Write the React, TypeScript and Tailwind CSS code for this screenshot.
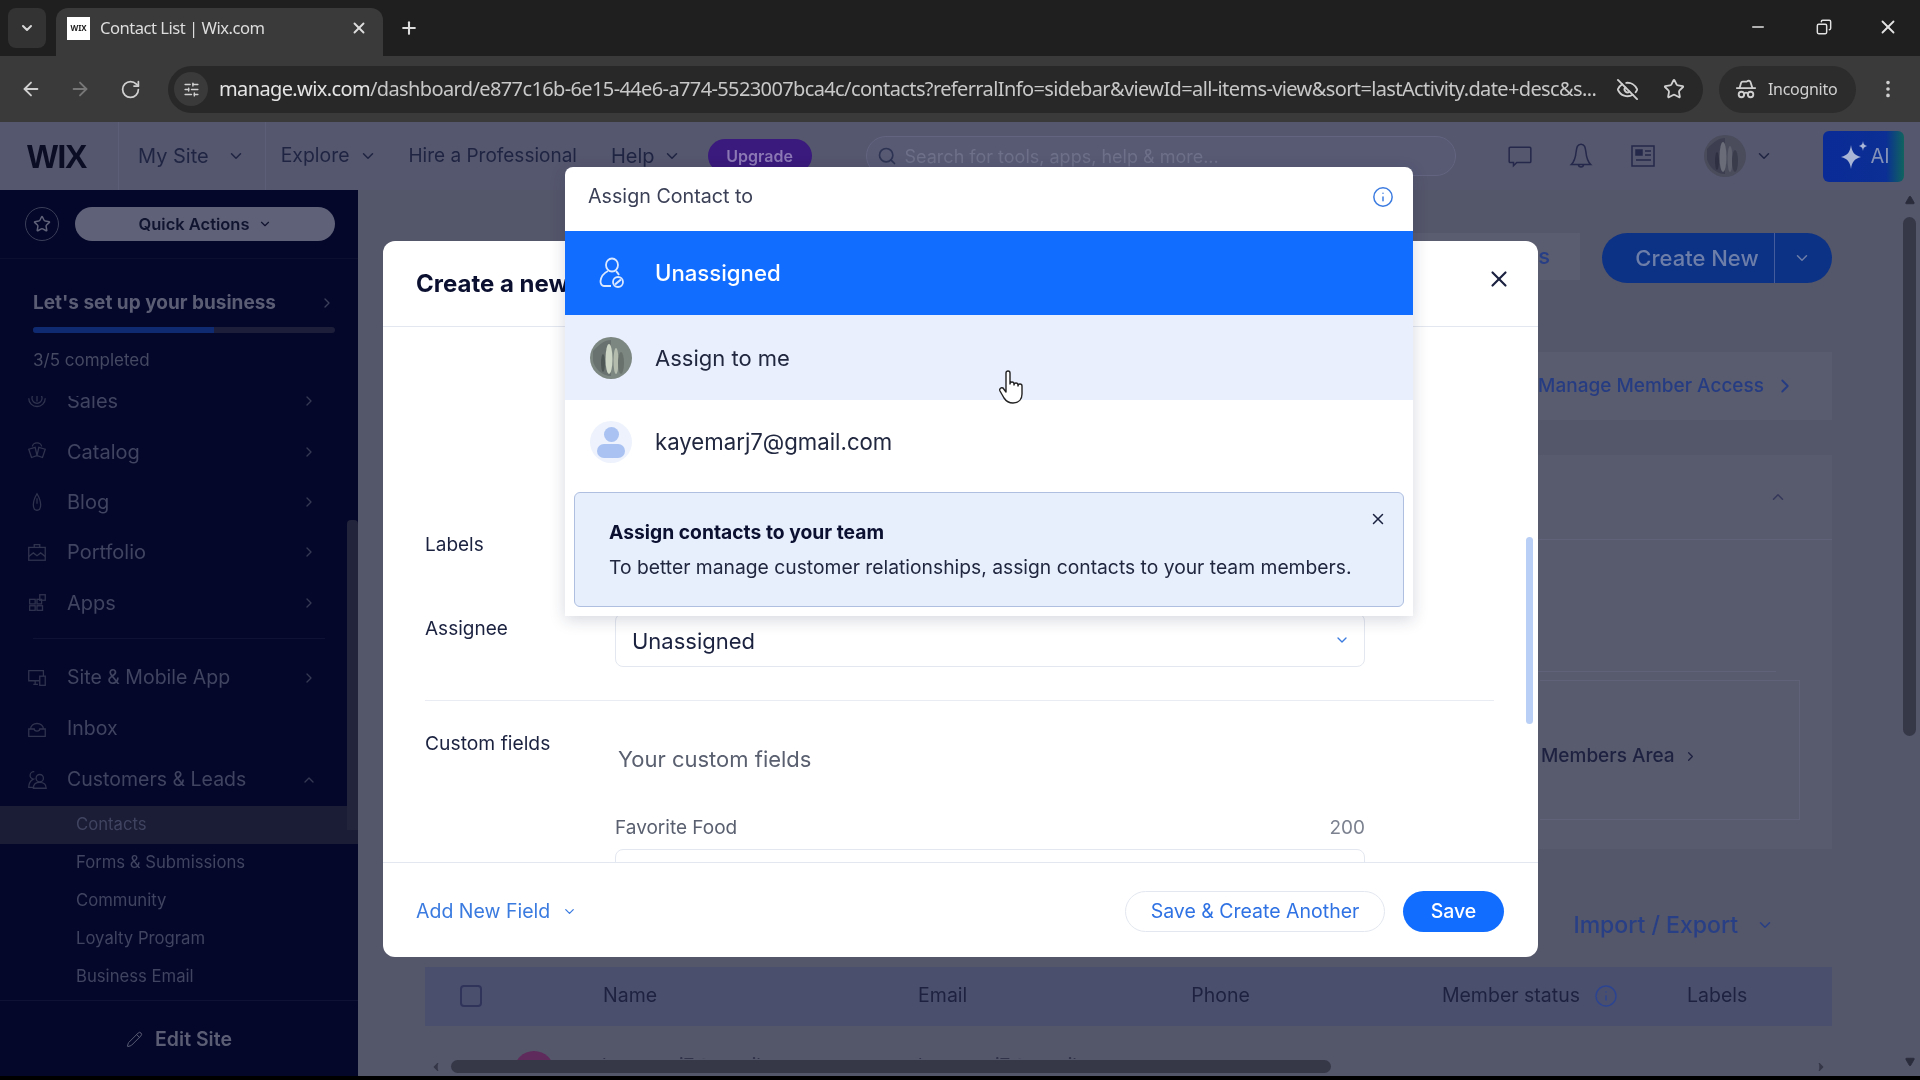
import React from "react";
import {
  ChevronDown, ChevronUp, ChevronRight, ChevronLeft, X, Plus, ArrowLeft, ArrowRight, RotateCw, SlidersHorizontal, EyeOff, Star, MoreVertical, Minus,
  Search, Info, Pencil, HatGlasses, Copy, Triangle,
} from "lucide-react";

function Ico({ children }: { children: React.ReactNode }) {
  return (
    <svg width="22" height="22" viewBox="0 0 24 24" fill="none" stroke="currentColor" strokeWidth="1.4" className="ml-[26px] shrink-0 text-[#30334e]">
      {children}
    </svg>
  );
}

const SalesIcon = () => (
  <Ico><circle cx="12" cy="9" r="5.5" /><path d="M12 5.5v7M3 9a9 9 0 0 0 18 0" /></Ico>
);
const CatalogIcon = () => (
  <Ico><path d="M3 9l7-2 2 9-6 2zM21 9l-7-2-2 9 6 2zM7 6a5 4 0 0 1 10 0" /></Ico>
);
const BlogIcon = () => (
  <Ico><path d="M12 3C9 8 8 12 8 15c0 4 2 6 4 6s4-2 4-6c0-3-1-7-4-12zM12 8v6" /></Ico>
);
const PortfolioIcon = () => (
  <Ico><rect x="3" y="7" width="18" height="14" /><path d="M9 7V4h6v3M3 17l5-4 4 3 4-3 5 4" /></Ico>
);
const AppsIcon = () => (
  <Ico><rect x="4" y="8" width="6" height="5" /><rect x="4" y="15" width="6" height="5" /><rect x="12" y="15" width="6" height="5" /><rect x="12" y="8" width="5" height="5" /><rect x="15" y="3" width="6" height="6" /></Ico>
);

const menuTop = [
  { icon: SalesIcon, label: "Sales", h: "h-[51px]" },
  { icon: CatalogIcon, label: "Catalog", h: "h-[51px]" },
  { icon: BlogIcon, label: "Blog", h: "h-[50px]" },
  { icon: PortfolioIcon, label: "Portfolio", h: "h-[50px]" },
  { icon: AppsIcon, label: "Apps", h: "h-[51px]" },
];

const subItems = ["Contacts", "Forms & Submissions", "Community", "Loyalty Program", "Business Email"];

function Photo({ size, dim }: { size: number; dim?: boolean }) {
  return (
    <svg width={size} height={size} viewBox="0 0 42 42" className="shrink-0">
      <circle cx="21" cy="21" r="21" fill={dim ? "#4a4c5c" : "#7d8781"} />
      <path d="M3 14 C10 6 16 3 21 3 V39 C12 39 5 32 3 24Z" fill={dim ? "#3d3f50" : "#6a7270"} />
      <ellipse cx="19" cy="22" rx="3.5" ry="15" fill={dim ? "#6a6c78" : "#cdd5c4"} />
      <ellipse cx="26" cy="24" rx="2.5" ry="13" fill={dim ? "#5e606e" : "#b4bcae"} />
      <ellipse cx="13" cy="26" rx="2" ry="9" fill={dim ? "#2f3142" : "#4f5755"} />
      <ellipse cx="31" cy="26" rx="3" ry="11" fill={dim ? "#3a3c4c" : "#69716c"} />
    </svg>
  );
}

function TabStrip() {
  return (
    <div className="h-14 bg-[#1f1f1f] flex items-end relative shrink-0 font-['Noto_Sans',sans-serif]">
      <div className="w-[38px] h-10 ml-2 mb-2 rounded-lg bg-[#333333] flex items-center justify-center text-[#d8d8d8]">
        <ChevronDown size={16} strokeWidth={3} />
      </div>
      <div className="w-[327px] h-12 ml-[10px] bg-[#3a3a3a] rounded-t-xl flex items-center pb-2 text-[#dddddd]">
        <div className="ml-[11px] w-[23px] h-[23px] bg-white text-[#222222] text-[8px] font-bold flex items-center justify-center">WIX</div>
        <span className="ml-[10px] text-[16.6px] tracking-[-0.5px] flex-1">Contact List | Wix.com</span>
        <X size={18} strokeWidth={2.5} className="mr-[15px]" />
      </div>
      <div className="ml-[16px] mb-[18px] text-[#dddddd]"><Plus size={20} strokeWidth={2.5} /></div>
      <div className="flex-1" />
      <div className="flex items-center mb-[18px] text-[#e2e2e2]">
        <Minus size={18} className="mr-[49px]" />
        <Copy size={16} strokeWidth={2.2} className="mr-[45px] -scale-x-100" />
        <X size={22} className="mr-[21px]" />
      </div>
    </div>
  );
}

function Toolbar() {
  return (
    <div className="h-[66px] bg-[#3a3a3a] flex items-center shrink-0 font-['Noto_Sans',sans-serif] text-[#d0d0d0]">
      <ArrowLeft size={22} className="ml-5" />
      <ArrowRight size={22} className="ml-[27px] text-[#777777]" />
      <RotateCw size={21} className="ml-[29px]" />
      <div className="ml-[27px] w-[1535px] h-[47px] rounded-full bg-[#282828] flex items-center">
        <div className="ml-[6px] w-[34px] h-[34px] rounded-full bg-[#3a3a3a] flex items-center justify-center">
          <SlidersHorizontal size={17} />
        </div>
        <span className="ml-[11px] w-[1378px] text-[20px] tracking-[-0.62px] whitespace-nowrap overflow-hidden text-[#c8c8c8]">
          <span className="text-[#e4e4e4]">manage.wix.com</span>/dashboard/e877c16b-6e15-44e6-a774-5523007bca4c/contacts?referralInfo=sidebar&amp;viewId=all-items-view&amp;sort=lastActivity.date+desc&amp;s...
        </span>
        <EyeOff size={23} className="ml-[19px]" />
        <Star size={22} className="ml-[24px]" />
      </div>
      <div className="ml-[16px] w-[137px] h-[47px] rounded-full bg-[#2c2c2c] flex items-center">
        <HatGlasses size={22} className="ml-[16px]" />
        <span className="ml-[11px] text-[16px] tracking-[-0.3px]">Incognito</span>
      </div>
      <MoreVertical size={22} className="ml-[21px]" />
    </div>
  );
}

function WixHeader() {
  return (
    <div className="h-[68px] bg-[#55576e] flex items-center shrink-0 text-[#1f2442] text-[19px] relative">
      <div className="ml-[27px] w-[64px] text-[33px] leading-none font-bold text-[#0a0d24] tracking-[-1px] font-['Liberation_Sans',sans-serif]">WIX</div>
      <div className="w-px h-full bg-[#5c5e77] ml-[27px]" />
      <span className="ml-[19px] text-[20px]">My Site</span>
      <ChevronDown size={18} className="ml-[18px]" />
      <div className="w-px h-full bg-[#5c5e77] ml-[20px]" />
      <span className="ml-[15px] text-[19.4px]">Explore</span>
      <ChevronDown size={18} className="ml-[10px]" />
      <span className="ml-[31px]">Hire a Professional</span>
      <span className="ml-[34px] text-[20px]">Help</span>
      <ChevronDown size={18} className="ml-2" />
      <div className="ml-[27px] w-[104px] h-[34px] rounded-full bg-[#3a1a7c] text-[#8b78b4] text-[16px] font-semibold flex items-center justify-center">Upgrade</div>
      <div className="ml-[54px] w-[590px] h-10 rounded-full border border-[#636580] bg-[#585a74] flex items-center text-[#6e7089]">
        <Search size={20} className="ml-[10px] text-[#2d3352]" />
        <span className="ml-2 text-[18px]">Search for tools, apps, help &amp; more...</span>
      </div>
      <svg width="26" height="26" viewBox="0 0 24 24" fill="none" stroke="#25284a" strokeWidth="1.4" className="ml-[51px] shrink-0">
        <path d="M3 4h18a1 1 0 0 1 1 1v12a1 1 0 0 1-1 1H9l-3 3v-3H3a1 1 0 0 1-1-1V5a1 1 0 0 1 1-1z" />
      </svg>
      <svg width="26" height="28" viewBox="0 0 24 26" fill="none" stroke="#25284a" strokeWidth="1.4" className="ml-[35px] shrink-0">
        <path d="M12 2C8.5 2 8 5 7.5 9 7 14 6 18 3 21h18c-3-3-4-7-4.500-12C16 5 15.500 2 12 2zM9.500 21c.5 3 4.500 3 5 0" />
      </svg>
      <svg width="24" height="24" viewBox="0 0 24 24" fill="none" stroke="#25284a" strokeWidth="1.5" className="ml-[37px] shrink-0">
        <rect x="1" y="2" width="22" height="20" />
        <rect x="5" y="6" width="6" height="5" fill="#25284a" />
        <path d="M14 7h6M14 11h6M5 16h15" />
      </svg>
      <div className="ml-[49px]"><Photo size={42} dim /></div>
      <ChevronDown size={18} className="ml-[9px]" />
      <div className="ml-[50px] w-[81px] h-[51px] rounded-md bg-[linear-gradient(90deg,#0a2a96_0%,#0b2f94_78%,#10645e_100%)] flex items-center pl-[15px] text-[#8492b8] text-[20px]">
        <svg width="34" height="34" viewBox="0 0 34 34" fill="#aab6d6" className="shrink-0">
          <path d="M13 6 C14 13 16 16 23 18 C16 20 14 23 13 30 C12 23 10 20 3 18 C10 16 12 13 13 6Z" />
          <path d="M25 2 C25.500 5 26 6 29 7 C26 8 25.500 9 25 12 C24.500 9 24 8 21 7 C24 6 24.500 5 25 2Z" />
        </svg>
        <span className="-ml-[1px]">AI</span>
      </div>
    </div>
  );
}

function Sidebar() {
  return (
    <div className="w-[358px] h-[886px] bg-[#05072a] shrink-0 flex flex-col relative text-[#5f6278]">
      <div className="h-[69px] border-b border-[#0c0f30] flex items-center shrink-0">
        <div className="ml-[25px] w-[34px] h-[34px] rounded-full border border-[#3b3e58] flex items-center justify-center">
          <Star size={18} />
        </div>
        <div className="ml-[16px] w-[260px] h-[34px] rounded-full bg-[#5f6178] text-[#10142f] text-[16.5px] font-semibold flex items-center justify-center gap-2">
          Quick Actions <ChevronDown size={14} />
        </div>
      </div>
      <div className="h-[137px] pl-[33px] pr-[23px] shrink-0">
        <div className="mt-[33px] flex items-center justify-between text-[19px] leading-[22px] font-bold text-[#5a5d74]">
          Let's set up your business <ChevronRight size={16} className="text-[#3d405a]" />
        </div>
        <div className="mt-[13px] h-[6px] rounded-full bg-[#1c1e3a] overflow-hidden"><div className="h-full w-[60%] bg-[#0f2a70]" /></div>
        <div className="mt-[17px] text-[17px] leading-5 text-[#464962]">3/5 completed</div>
      </div>
      <div className="flex-1 overflow-hidden relative">
        <div className="-mt-[21px]">
          {menuTop.map((m) => (
            <div key={m.label} className={`${m.h} flex items-center text-[20px] text-[#414460]`}>
              <m.icon />
              <span className="ml-[19px] flex-1">{m.label}</span>
              <ChevronRight size={16} className="mr-[41px] text-[#363954]" />
            </div>
          ))}
          <div className="mx-[33px] border-t border-[#0f1234] mt-[10px] mb-[13px]" />
          <div className="h-[51px] flex items-center text-[19.5px] text-[#414460]">
            <Ico><path d="M3 4h16v11H3zM8 19h5M10 15v4" /><rect x="15" y="10" width="6" height="10" fill="#05072a" /></Ico>
            <span className="ml-[19px] flex-1">Site &amp; Mobile App</span>
            <ChevronRight size={16} className="mr-[41px] text-[#363954]" />
          </div>
          <div className="h-[51px] flex items-center text-[19.5px] text-[#414460]">
            <Ico><path d="M5 12a7 6 0 0 1 14 0M3 12h6c0 3 6 3 6 0h6v8H3z" /></Ico>
            <span className="ml-[19px]">Inbox</span>
          </div>
          <div className="h-[52px] flex items-center text-[19.5px] text-[#414460]">
            <Ico><path d="M9 3a4 4 0 0 0-1 8c-4 2-5 6-5 9h6M15 6a4 4 0 1 1 0 8 4 4 0 0 1 0-8zM8 21c0-5 3-6.500 7-6.500s7 1.500 7 6.500z" /></Ico>
            <span className="ml-[19px] flex-1">Customers &amp; Leads</span>
            <ChevronUp size={16} className="mr-[41px] text-[#363954]" />
          </div>
          {subItems.map((s, i) => (
            <div key={s} className={`h-[38px] flex items-center pl-[76px] text-[16.7px] text-[#414460] ${i === 0 ? "bg-[#1b1d36]" : ""}`}>{s}</div>
          ))}
        </div>
        <div className="absolute right-0 top-[124px] w-[11px] h-[310px] bg-[#22243b] rounded-t" />
      </div>
      <div className="h-[76px] pt-[2px] border-t border-[#0f1234] flex items-center justify-center gap-3 text-[19.5px] font-semibold text-[#5a5d74] shrink-0">
        <Pencil size={17} strokeWidth={1.4} />Edit Site
      </div>
      <div className="absolute left-[358px] top-[16px] w-[17px] h-[34px] rounded-r-full bg-[#2b2d45] flex items-center text-[#45475f]">
        <ChevronLeft size={12} />
      </div>
    </div>
  );
}

function Main() {
  return (
    <div className="flex-1 h-[886px] bg-[#54566a] relative font-['Inter',sans-serif]">
      <div className="pl-[67px] w-[1474px]">
        <div className="h-[93px] pt-[43px] flex items-start justify-end">
          <div className="h-[47px] pl-2 pr-[30px] mr-[22px] bg-[#5a5c70] text-[#283f86] text-[22px] font-medium leading-[47px]">More Actions</div>
          <div className="w-[230px] h-[50px] rounded-full bg-[#0c3285] flex items-center text-[#6d7ea8] text-[22px]">
            <span className="w-[173px] pl-[18px] text-center font-medium border-r border-[#445c9c] leading-[50px]">Create New</span>
            <ChevronDown size={18} className="ml-[18px]" />
          </div>
        </div>
        <div className="h-[68px] mt-[69px] bg-[#595b6f] flex items-center justify-end text-[#263c82] text-[19px] font-medium">
          <span>Manage Member Access</span>
          <ChevronRight size={22} className="ml-[10px] mr-[36px]" />
        </div>
        <div className="h-[394px] mt-[35px] bg-[#585a6e] flex flex-col">
          <div className="h-[85px] flex items-center justify-end border-b border-[#60627a] shrink-0">
            <ChevronUp size={18} className="mr-[45px] text-[#35385a]" />
          </div>
          <div className="h-[132px] mr-[56px] border-b border-[#60627a] shrink-0" />
          <div className="mt-[8px] mr-[32px] ml-auto w-[260px] h-[140px] pt-[12px] border border-[#60627a] border-l-0 flex items-center text-[#1e2240] text-[19px] font-medium">
            <span className="ml-[1px]">Members Area</span>
            <ChevronRight size={15} className="ml-2" />
          </div>
        </div>
        <div className="h-[118px] pt-[34px] flex items-center justify-end text-[#283f86] text-[23px] font-medium">
          <span>Import / Export</span>
          <ChevronDown size={18} className="ml-[18px] mr-[58px]" />
        </div>
        <div className="h-[59px] pb-[1px] bg-[#4a4f6e] flex items-center text-[19.5px] text-[#1e2240]">
          <div className="ml-[35px] w-[22px] h-[22px] rounded border-2 border-[#30345a]" />
          <span className="ml-[121px]">Name</span>
          <span className="ml-[261px]">Email</span>
          <span className="ml-[224px]">Phone</span>
          <span className="ml-[192px]">Member status</span>
          <Info size={24} strokeWidth={1.5} className="ml-[14px] text-[#2c4490]" />
          <span className="ml-[69px]">Labels</span>
        </div>
      </div>
      <div className="absolute left-[156px] top-[861px] w-[40px] h-[10px] overflow-hidden">
        <div className="w-10 h-10 rounded-full bg-[#5f2a5c]" />
      </div>
      <div className="absolute left-[244px] top-[864px] h-[5px] overflow-hidden text-[19px] leading-6 text-[#30324a] whitespace-nowrap">kayemarj7@gmail.com</div>
      <div className="absolute left-[560px] top-[864px] h-[5px] overflow-hidden text-[19px] leading-6 text-[#30324a] whitespace-nowrap">kayemarj7@gmail.com</div>
      <div className="absolute left-[93px] top-[870px] w-[880px] h-[13px] rounded-full bg-[#363848]" />
      <ChevronLeft size={14} fill="#363848" className="absolute left-[71px] top-[870px] text-[#363848]" />
      <ChevronRight size={14} fill="#363848" className="absolute left-[1456px] top-[870px] text-[#363848]" />
      <div className="absolute right-[4px] top-[27px] w-[13px] h-[519px] rounded-full bg-[#363848]" />
      <Triangle size={10} fill="#2a2c3c" className="absolute right-[5px] top-[5px] text-[#2a2c3c]" />
      <Triangle size={10} fill="#2a2c3c" className="absolute right-[5px] top-[867px] rotate-180 text-[#2a2c3c]" />
    </div>
  );
}

function CreateModal() {
  return (
    <div className="absolute left-[383px] top-[241px] w-[1155px] h-[716px] bg-white rounded-xl flex flex-col text-[#1b2240] font-['Inter',sans-serif]">
      <div className="h-[86px] pb-[10px] border-b border-[#e3e7ef] flex items-center justify-between shrink-0 pl-[33px] pr-[26px]">
        <span className="text-[24px] font-bold text-[#0b1030] mt-[10px]">Create a new</span>
        <X size={26} />
      </div>
      <div className="flex-1 overflow-hidden relative pl-[42px] pr-[44px] pt-[206px] text-[19px]">
        <div className="h-[80px] leading-6">Labels</div>
        <div className="flex">
          <div className="w-[190px] pt-1 leading-6">Assignee</div>
          <div className="w-[750px] h-[54px] pb-[1px] border border-[#e3e7ef] rounded-lg flex items-center justify-between px-4 text-[22px]">
            <span className="mt-[4px]">Unassigned</span> <ChevronDown size={16} className="text-[#3b7be0] -mr-[2px]" />
          </div>
        </div>
        <div className="mt-[33px] border-t border-[#e9ecf3]" />
        <div className="flex mt-[30px]">
          <div className="w-[190px] leading-6 text-[19.3px]">Custom fields</div>
          <div className="w-[750px]">
            <div className="ml-[3px] mt-[13px] text-[22px] leading-[30px] text-[#5a6070]">Your custom fields</div>
            <div className="mt-[42px] flex justify-between leading-6 text-[#5a6070]"><span>Favorite Food</span><span className="text-[#7c8290]">200</span></div>
            <div className="mt-[9px] h-[40px] border border-[#e3e7ef] rounded-lg" />
          </div>
        </div>
        <div className="absolute left-[1143px] top-[210px] w-[7px] h-[187px] rounded-full bg-[#b9cff5]" />
      </div>
      <div className="h-[95px] pt-[2px] border-t border-[#e3e7ef] flex items-center shrink-0 pl-[33px] pr-[34px] text-[19.5px]">
        <span className="text-[#3b7be0] mt-[2px]">Add New Field</span>
        <ChevronDown size={15} className="ml-[12px] text-[#3b7be0]" />
        <div className="ml-auto w-[260px] h-[41px] pt-[1px] rounded-full border border-[#e3e7ef] text-[#2f72e4] flex items-center justify-center">Save &amp; Create Another</div>
        <div className="ml-[18px] w-[101px] h-[41px] pt-[1px] rounded-full bg-[#116dff] text-white font-medium flex items-center justify-center">Save</div>
      </div>
    </div>
  );
}

function AssignDropdown() {
  return (
    <div className="absolute left-[565px] top-[167px] w-[848px] h-[449px] bg-white rounded-t-lg shadow-[0_4px_16px_rgba(30,40,80,0.18)] flex flex-col font-['Inter',sans-serif] text-[#20273f]">
      <div className="h-[64px] pb-[4px] flex items-center justify-between pl-[23px] pr-[19px] shrink-0">
        <span className="text-[19.7px] text-[#3b4057]">Assign Contact to</span>
        <Info size={22} strokeWidth={1.6} className="text-[#3b7be0]" />
      </div>
      <div className="h-[84px] bg-[#116dff] flex items-center pl-[25px] text-white shrink-0">
        <svg width="42" height="42" viewBox="0 0 42 42" fill="none" stroke="#dbe8ff" strokeWidth="1.8" className="shrink-0">
          <ellipse cx="22" cy="13" rx="6" ry="6.500" />
          <path d="M18 19C14 21 11 25 10.500 29c-.2 3 1.500 5 3.500 5h7M26 19c1 1 2 2 3 4" />
          <circle cx="28" cy="30" r="5" />
          <path d="M25 32.500l6-5" strokeWidth="2.200" />
        </svg>
        <span className="ml-[23px] text-[22.200px] font-medium">Unassigned</span>
      </div>
      <div className="h-[85px] pt-[1px] bg-[#e9effc] flex items-center pl-[25px] shrink-0">
        <Photo size={42} />
        <span className="ml-[23px] text-[22px]">Assign to me</span>
      </div>
      <div className="h-[84px] flex items-center pl-[25px] shrink-0">
        <div className="w-[42px] h-[42px] rounded-full bg-[#edf2fc] flex flex-col items-center justify-center overflow-hidden">
          <div className="w-[15px] h-[15px] rounded-full bg-[#a9c2f2]" />
          <div className="w-[28px] h-[14px] rounded-full bg-[#a9c2f2] mt-[2px]" />
        </div>
        <span className="ml-[23px] text-[22.200px]">kayemarj7@gmail.com</span>
      </div>
      <div className="mx-[9px] mt-[8px] h-[115px] rounded-md bg-[#e7effd] border border-[#aebfe0] relative pl-[34px] pt-[27px]">
        <div className="text-[19.300px] leading-6 font-bold text-[#0b1030]">Assign contacts to your team</div>
        <div className="mt-[11px] text-[19.300px] leading-6 text-[#20273f] whitespace-nowrap">To better manage customer relationships, assign contacts to your team members.</div>
        <X size={18} className="absolute right-[16px] top-[17px] text-[#1b2240]" />
      </div>
    </div>
  );
}

export default function App() {
  return (
    <div className="w-[1920px] h-[1080px] overflow-hidden relative bg-black font-['Inter',sans-serif] blur-[0.5px]">
      <TabStrip />
      <Toolbar />
      <WixHeader />
      <div className="flex">
        <Sidebar />
        <Main />
      </div>
      <CreateModal />
      <AssignDropdown />
      <svg width="28" height="35" viewBox="0 0 28 35" fill="white" stroke="#222222" strokeWidth="1.4" strokeLinejoin="round" className="absolute left-[999px] top-[370px]">
        <path d="M7 3a2 2 0 0 1 4 0v11a2 2 0 0 1 4 0v1a2 2 0 0 1 4 0v1a2 2 0 0 1 4 0v8c0 5-3 9-9 9-5 0-7-2-9-5l-4-7c-1-2 1-4 3-3l3 4z" />
      </svg>
    </div>
  );
}
